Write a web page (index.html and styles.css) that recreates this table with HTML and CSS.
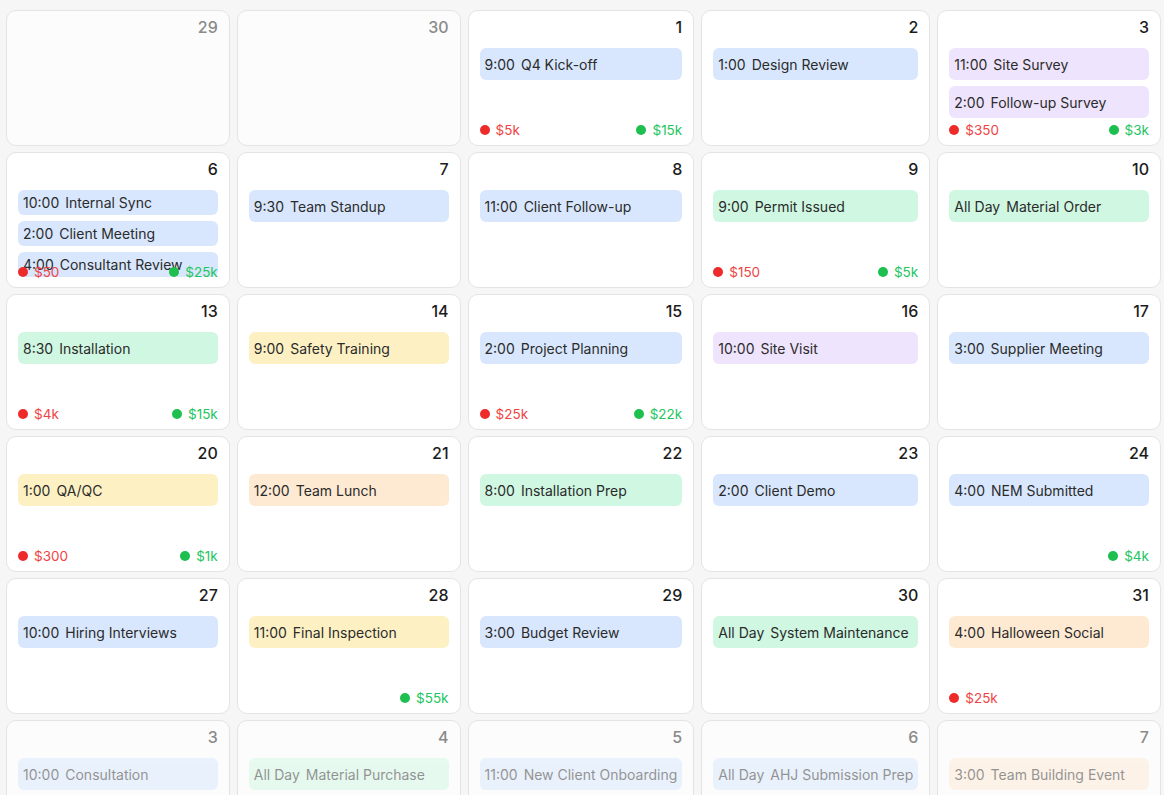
FILE: index.html
```html
<!DOCTYPE html>
<html lang="en">
<head>
<meta charset="utf-8">
<title>Calendar</title>
<link rel="stylesheet" href="styles.css">
</head>
<body>
<div class="grid">
  <!-- Row 1 -->
  <div class="cell other"><div class="num">29</div><div class="events"></div><div class="foot"></div></div>
  <div class="cell other"><div class="num">30</div><div class="events"></div><div class="foot"></div></div>
  <div class="cell"><div class="num">1</div>
    <div class="events"><div class="ev blue"><span class="t">9:00</span><span>Q4 Kick-off</span></div></div>
    <div class="foot"><span class="money neg"><i class="dot"></i>$5k</span><span class="money pos"><i class="dot"></i>$15k</span></div>
  </div>
  <div class="cell"><div class="num">2</div>
    <div class="events"><div class="ev blue"><span class="t">1:00</span><span>Design Review</span></div></div>
    <div class="foot"></div>
  </div>
  <div class="cell"><div class="num">3</div>
    <div class="events">
      <div class="ev purple"><span class="t">11:00</span><span>Site Survey</span></div>
      <div class="ev purple"><span class="t">2:00</span><span>Follow-up Survey</span></div>
    </div>
    <div class="foot"><span class="money neg"><i class="dot"></i>$350</span><span class="money pos"><i class="dot"></i>$3k</span></div>
  </div>

  <!-- Row 2 -->
  <div class="cell"><div class="num">6</div>
    <div class="events">
      <div class="ev blue"><span class="t">10:00</span><span>Internal Sync</span></div>
      <div class="ev blue"><span class="t">2:00</span><span>Client Meeting</span></div>
      <div class="ev blue"><span class="t">4:00</span><span>Consultant Review</span></div>
    </div>
    <div class="foot"><span class="money neg"><i class="dot"></i>$50</span><span class="money pos"><i class="dot"></i>$25k</span></div>
  </div>
  <div class="cell"><div class="num">7</div>
    <div class="events"><div class="ev blue"><span class="t">9:30</span><span>Team Standup</span></div></div>
    <div class="foot"></div>
  </div>
  <div class="cell"><div class="num">8</div>
    <div class="events"><div class="ev blue"><span class="t">11:00</span><span>Client Follow-up</span></div></div>
    <div class="foot"></div>
  </div>
  <div class="cell"><div class="num">9</div>
    <div class="events"><div class="ev green"><span class="t">9:00</span><span>Permit Issued</span></div></div>
    <div class="foot"><span class="money neg"><i class="dot"></i>$150</span><span class="money pos"><i class="dot"></i>$5k</span></div>
  </div>
  <div class="cell"><div class="num">10</div>
    <div class="events"><div class="ev green"><span class="t">All Day</span><span>Material Order</span></div></div>
    <div class="foot"></div>
  </div>

  <!-- Row 3 -->
  <div class="cell"><div class="num">13</div>
    <div class="events"><div class="ev green"><span class="t">8:30</span><span>Installation</span></div></div>
    <div class="foot"><span class="money neg"><i class="dot"></i>$4k</span><span class="money pos"><i class="dot"></i>$15k</span></div>
  </div>
  <div class="cell"><div class="num">14</div>
    <div class="events"><div class="ev yellow"><span class="t">9:00</span><span>Safety Training</span></div></div>
    <div class="foot"></div>
  </div>
  <div class="cell"><div class="num">15</div>
    <div class="events"><div class="ev blue"><span class="t">2:00</span><span>Project Planning</span></div></div>
    <div class="foot"><span class="money neg"><i class="dot"></i>$25k</span><span class="money pos"><i class="dot"></i>$22k</span></div>
  </div>
  <div class="cell"><div class="num">16</div>
    <div class="events"><div class="ev purple"><span class="t">10:00</span><span>Site Visit</span></div></div>
    <div class="foot"></div>
  </div>
  <div class="cell"><div class="num">17</div>
    <div class="events"><div class="ev blue"><span class="t">3:00</span><span>Supplier Meeting</span></div></div>
    <div class="foot"></div>
  </div>

  <!-- Row 4 -->
  <div class="cell"><div class="num">20</div>
    <div class="events"><div class="ev yellow"><span class="t">1:00</span><span>QA/QC</span></div></div>
    <div class="foot"><span class="money neg"><i class="dot"></i>$300</span><span class="money pos"><i class="dot"></i>$1k</span></div>
  </div>
  <div class="cell"><div class="num">21</div>
    <div class="events"><div class="ev orange"><span class="t">12:00</span><span>Team Lunch</span></div></div>
    <div class="foot"></div>
  </div>
  <div class="cell"><div class="num">22</div>
    <div class="events"><div class="ev green"><span class="t">8:00</span><span>Installation Prep</span></div></div>
    <div class="foot"></div>
  </div>
  <div class="cell"><div class="num">23</div>
    <div class="events"><div class="ev blue"><span class="t">2:00</span><span>Client Demo</span></div></div>
    <div class="foot"></div>
  </div>
  <div class="cell"><div class="num">24</div>
    <div class="events"><div class="ev blue"><span class="t">4:00</span><span>NEM Submitted</span></div></div>
    <div class="foot"><span class="money pos"><i class="dot"></i>$4k</span></div>
  </div>

  <!-- Row 5 -->
  <div class="cell"><div class="num">27</div>
    <div class="events"><div class="ev blue"><span class="t">10:00</span><span>Hiring Interviews</span></div></div>
    <div class="foot"></div>
  </div>
  <div class="cell"><div class="num">28</div>
    <div class="events"><div class="ev yellow"><span class="t">11:00</span><span>Final Inspection</span></div></div>
    <div class="foot"><span class="money pos"><i class="dot"></i>$55k</span></div>
  </div>
  <div class="cell"><div class="num">29</div>
    <div class="events"><div class="ev blue"><span class="t">3:00</span><span>Budget Review</span></div></div>
    <div class="foot"></div>
  </div>
  <div class="cell"><div class="num">30</div>
    <div class="events"><div class="ev green"><span class="t">All Day</span><span>System Maintenance</span></div></div>
    <div class="foot"></div>
  </div>
  <div class="cell"><div class="num">31</div>
    <div class="events"><div class="ev orange"><span class="t">4:00</span><span>Halloween Social</span></div></div>
    <div class="foot"><span class="money neg"><i class="dot"></i>$25k</span></div>
  </div>

  <!-- Row 6 -->
  <div class="cell other"><div class="num">3</div>
    <div class="events"><div class="ev blue"><span class="t">10:00</span><span>Consultation</span></div></div>
    <div class="foot"></div>
  </div>
  <div class="cell other"><div class="num">4</div>
    <div class="events"><div class="ev green"><span class="t">All Day</span><span>Material Purchase</span></div></div>
    <div class="foot"></div>
  </div>
  <div class="cell other"><div class="num">5</div>
    <div class="events"><div class="ev blue"><span class="t">11:00</span><span>New Client Onboarding</span></div></div>
    <div class="foot"></div>
  </div>
  <div class="cell other"><div class="num">6</div>
    <div class="events"><div class="ev blue"><span class="t">All Day</span><span>AHJ Submission Prep</span></div></div>
    <div class="foot"></div>
  </div>
  <div class="cell other"><div class="num">7</div>
    <div class="events"><div class="ev orange"><span class="t">3:00</span><span>Team Building Event</span></div></div>
    <div class="foot"></div>
  </div>
</div>
</body>
</html>
```

FILE: styles.css
```css
html, body {
  margin: 0;
  padding: 0;
  height: 795px;
  overflow: hidden;
  background: #f6f6f6;
}

body {
  font-family: Inter, "Noto Sans", "Liberation Sans", sans-serif;
  color: #222;
}

.grid {
  display: grid;
  grid-template-columns: repeat(5, 1fr);
  column-gap: 7px;
  row-gap: 6px;
  padding: 10px 3px 0 6px;
}

.cell {
  height: 136px;
  box-sizing: border-box;
  border: 1px solid #e4e4e4;
  border-radius: 10px;
  background: #fff;
  padding: 4px 11px 6px;
  display: flex;
  flex-direction: column;
}

.cell.other {
  background: #fcfcfc;
}

.num {
  height: 24px;
  line-height: 24px;
  text-align: right;
  font-size: 16px;
  font-weight: 500;
  color: #1c1c1c;
  margin-bottom: 9px;
  flex: none;
}

.cell.other .num {
  color: #8a8a8a;
}

.events {
  flex: 1 1 0;
  min-height: 0;
  display: flex;
  flex-direction: column;
  gap: 6px;
}

.cell.other .events {
  opacity: 0.5;
}

.ev {
  box-sizing: border-box;
  flex: 0 1 32px;
  display: flex;
  align-items: center;
  padding: 4px 5px;
  border-radius: 6px;
  font-size: 14px;
  line-height: 17px;
  white-space: nowrap;
  color: #2b2b2b;
}

.ev .t {
  margin-right: 6px;
}

.blue { background: #d8e7fd; }
.purple { background: #efe4fd; }
.green { background: #cff7e1; }
.yellow { background: #fdf1c4; }
.orange { background: #feead3; }

.foot {
  flex: none;
  height: 18px;
  margin-top: 3px;
  display: flex;
  align-items: center;
  font-size: 13.5px;
  line-height: 18px;
}

.money {
  display: flex;
  align-items: center;
}

.money.pos {
  margin-left: auto;
  color: #22c55e;
}

.money.neg {
  color: #ef4444;
}

.dot {
  width: 10px;
  height: 10px;
  border-radius: 50%;
  margin-right: 6px;
  background: currentColor;
}

.money.neg .dot { background: #ee2b2b; }
.money.pos .dot { background: #1dbf4f; }
```
